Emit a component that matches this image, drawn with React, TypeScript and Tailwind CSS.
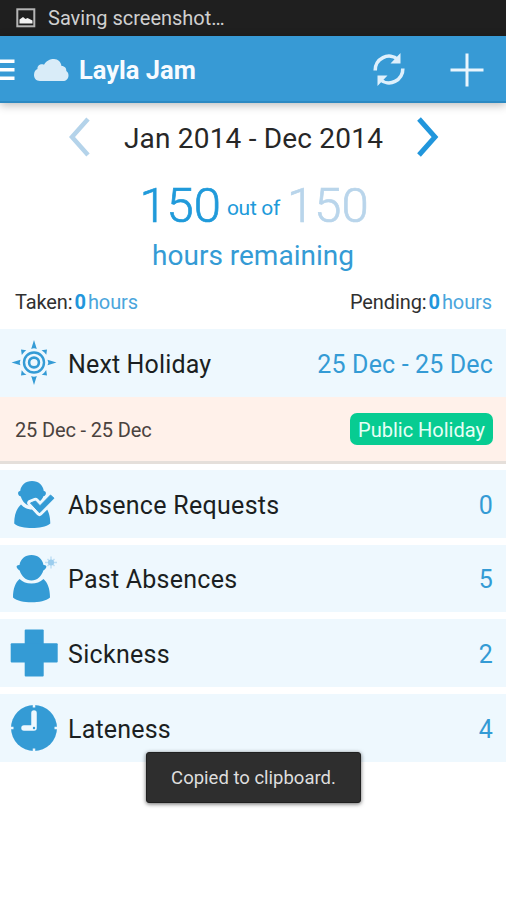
import type { ReactNode } from "react";

const BLUE = "#349bd5";

function SunIcon() {
  return (
    <svg width="46" height="46" viewBox="0 0 46 46" fill="none">
      <circle cx="23" cy="22.500" r="10" stroke={BLUE} strokeWidth="2.400" />
      <circle cx="23" cy="22.500" r="4.900" stroke={BLUE} strokeWidth="2.600" />
      {[0, 90, 180, 270].map((a) => (
        <g key={a} transform={`rotate(${a} 23 22.500)`} fill={BLUE}>
          <path d="M23 0 25.800 9Q23 7.500 20.200 9Z" />
          <path d="M36 9.500 35.300 14.800Q33.500 12 30.500 10.300Z" />
        </g>
      ))}
    </svg>
  );
}

function RequestIcon() {
  const check = "M19.500 24 24.500 22 29 26.700 39.500 16 43 19.200 28.500 33.800Z";
  return (
    <svg width="46" height="50" viewBox="0 0 46 50">
      <path
        d="M21 2C27.500 2 32 6 32.800 12 34.500 12 35.300 13.500 34.800 15 34.400 16.500 33.500 17 32.200 17.500 30.500 23 26.500 27 21 27S11.500 23 9.800 17.500C8.500 17 7.600 16.500 7.200 15 6.700 13.500 7.500 12 9.200 12 10 6 14.500 2 21 2Z"
        fill={BLUE}
      />
      <path
        d="M10 25.500C13 28.800 16.500 30.500 21 30.500S29 28.800 34 27C37 31 39.300 36 39.300 44.500 35 48 28 49 21 49S7 48 3.200 44.500C3.200 35 6 29 10 25.500Z"
        fill={BLUE}
      />
      <path d={check} fill="#eef8fe" stroke="#eef8fe" strokeWidth="6.500" strokeLinejoin="round" />
      <path d={check} fill={BLUE} stroke={BLUE} strokeWidth="1" strokeLinejoin="round" />
    </svg>
  );
}

function PersonIcon() {
  return (
    <svg width="46" height="50" viewBox="0 0 46 50">
      <path
        d="M20.500 2C27 2 31.500 6 32.500 12 34.500 11.800 36 13 35.200 14.500 34.500 16 33.500 16.800 32.300 17.500 30.500 23.500 26 27.500 20.500 27.500S10.500 23.500 8.700 17.500C7.500 16.800 6.500 16 5.800 14.500 5 13 6.500 11.800 8.500 12 9.500 6 14 2 20.500 2Z"
        fill={BLUE}
      />
      <path
        d="M8.500 26C12 29.200 15.500 30.500 20.500 30.500S29 29.200 32.500 26C36.500 29.500 39 35.500 39 44.500 35 48 28 49.200 20.500 49.200S6 48 2 44.500C2 35.500 4.500 29.500 8.500 26Z"
        fill={BLUE}
      />
      <g stroke="#9bcdee" strokeWidth="1.400">
        <circle cx="40" cy="9.500" r="3" fill="#9bcdee" stroke="none" />
        <path d="M40 3.500V15.500M34 9.500H46M36.500 6 43.500 13M43.500 6 36.500 13" opacity=".6" />
      </g>
    </svg>
  );
}

function CrossIcon() {
  return (
    <svg width="48" height="48" viewBox="0 0 48 48" fill={BLUE}>
      <rect x="14.700" y="0.500" width="19" height="47" rx="1" />
      <rect x="0.700" y="14.200" width="47" height="19.300" rx="1" />
    </svg>
  );
}

function ClockIcon() {
  return (
    <svg width="48" height="48" viewBox="0 0 48 48">
      <circle cx="24" cy="24" r="23" fill={BLUE} />
      <path d="M24 0V3.500M24 44.500V48M0 24H3.500M44.500 24H48" stroke="#eef8fe" strokeWidth="2.500" />
      <path d="M24 9V24H14" fill="none" stroke="#eef8fe" strokeWidth="5.500" strokeLinecap="round" strokeLinejoin="round" />
      <circle cx="24" cy="24" r="1.200" fill={BLUE} />
    </svg>
  );
}

interface RowProps {
  icon: ReactNode;
  label: string;
  value: string;
  spacing?: string;
}

function Row({ icon, label, value, spacing = "" }: RowProps) {
  return (
    <div className="flex h-[67.500px] shrink-0 items-center bg-[#eef8fe] pr-[13px] pl-[10px]">
      <div className="flex w-12 items-center justify-center">{icon}</div>
      <div className={`ml-[10px] flex-1 pt-[3px] text-[25px] text-[#1b1f22] ${spacing}`}>{label}</div>
      <div className="pt-[3px] text-[25px] tracking-[0.150px] text-[#349bd5]">{value}</div>
    </div>
  );
}

function Hours({ label }: { label: string }) {
  return (
    <div className="flex tracking-[-0.100px]">
      <span>{label}</span>
      <b className="ml-[2px] text-[#2196dc]">0</b>
      <span className="ml-[2px] text-[#4aa5dc]">hours</span>
    </div>
  );
}

export default function App() {
  return (
    <div className="relative flex h-[900px] w-[506px] flex-col overflow-hidden bg-white font-['Roboto',sans-serif] leading-none whitespace-nowrap">
      <div className="flex h-[35.500px] shrink-0 items-center bg-[#1f1f1f] pl-4">
        <svg width="20" height="20" viewBox="0 0 20 20">
          <rect x="1.300" y="1.300" width="17" height="17" fill="none" stroke="#b5b5b5" strokeWidth="2" />
          <path d="M3.500 15.500V11.500L7 9 9.500 11 11.500 10 16.500 12.500V15.500Z" fill="#f2f2f2" />
        </svg>
        <span className="ml-3 text-[20px] text-[#d0d0d0]">Saving screenshot…</span>
      </div>

      <header className="z-10 flex h-[67px] shrink-0 items-center border-b-2 border-[#2c89c2] bg-[#379ad5] pt-[3px] shadow-[0_2px_9px_rgba(0,0,0,0.28)]">
        <svg className="mt-[1px]" width="15" height="22" viewBox="0 0 15 22" fill="#fff">
          <path d="M0 0.500H14.500V4H0ZM0 9H14.500V12.500H0ZM0 17.500H14.500V21H0Z" />
        </svg>
        <svg className="ml-[18px]" width="37" height="24" viewBox="0 0 37 24" fill="#d9ecf8">
          <path d="M7 23C3 23 1 20 1 17 1 14 2.500 11.500 4.500 11 4 7.500 8 5.300 11 6.800 13 3 17 1 21 1 25 1 28 4 28.500 8 32 8 33.500 10.500 33.300 13 35 14 35.500 16 35.500 17.500 35.500 21 33 23 30 23Z" />
        </svg>
        <h1 className="mt-[3px] ml-[9px] text-[25.500px] font-bold text-[#f7fbff]">Layla Jam</h1>
        <svg className="mr-[43px] ml-auto" width="34" height="36" viewBox="0 0 34 36" fill="none" stroke="#dff0fc" strokeWidth="3.600">
          <path d="M3.200 18.500A13.800 13.800 0 0 1 26 7.500M30.800 16.500A13.800 13.800 0 0 1 8 27.500" />
          <path d="M28.500 1V11.500H18.500ZM5.500 34V23.500H15.500Z" fill="#dff0fc" stroke="none" />
        </svg>
        <svg className="mr-[21px]" width="36" height="36" viewBox="0 0 36 36" stroke="#e9f5fd" strokeWidth="3">
          <path d="M18 1.500V34.500M1.500 18H34.500" />
        </svg>
      </header>

      <section className="flex h-[226.500px] shrink-0 flex-col">
        <div className="flex h-[69px] items-center justify-between pr-[67px] pl-[68px]">
          <svg width="22" height="40" viewBox="0 0 22 40" fill="none" stroke="#b4d3ea" strokeWidth="4.500">
            <path d="M20 2 4 20 20 38" />
          </svg>
          <span className="pt-[3px] text-[28px] tracking-[0.200px] text-[#272727]">Jan 2014 - Dec 2014</span>
          <svg width="22" height="40" viewBox="0 0 22 40" fill="none" stroke="#2196dc" strokeWidth="5">
            <path d="M2 2 18 20 2 38" />
          </svg>
        </div>
        <div className="flex h-[66px] items-center justify-center pt-[2px] pl-[2px] text-[49px] font-light text-[#209ada]">
          <span className="[-webkit-text-stroke:0.700px_#209ada]">150</span>
          <span className="mr-[7px] ml-[6px] pt-[6px] text-[21px] font-normal tracking-[-0.300px]">out of</span>
          <span className="text-[#b9d5eb] [-webkit-text-stroke:0.700px_#b9d5eb]">150</span>
        </div>
        <div className="flex h-[36px] items-center justify-center pt-[1px] text-[28px] text-[#349bd5]">hours remaining</div>
        <div className="flex h-[55px] items-center justify-between pt-[2px] pr-[14px] pl-[15px] text-[20px] text-[#303030]">
          <Hours label="Taken:" />
          <Hours label="Pending:" />
        </div>
      </section>

      <Row icon={<SunIcon />} label="Next Holiday" value="25 Dec - 25 Dec" spacing="tracking-[0.150px]" />
      <div className="flex h-[67.500px] shrink-0 items-center justify-between border-b-[3px] border-[#e5dfda] bg-[#fff1ea] pr-[13px] pl-[15px]">
        <span className="pt-[3px] text-[20px] tracking-[-0.150px] text-[#4a423e]">25 Dec - 25 Dec</span>
        <span className="flex h-8 w-[143px] items-center justify-center rounded-[7px] bg-[#07cc92] pt-[3px] text-[20px] text-[#e7fff6]">Public Holiday</span>
      </div>
      <div className="flex flex-col gap-[7.200px] pt-[6px]">
        <Row icon={<RequestIcon />} label="Absence Requests" value="0" spacing="tracking-[0.300px]" />
        <Row icon={<PersonIcon />} label="Past Absences" value="5" spacing="tracking-[0.250px]" />
        <Row icon={<CrossIcon />} label="Sickness" value="2" spacing="tracking-[0.300px]" />
        <Row icon={<ClockIcon />} label="Lateness" value="4" spacing="tracking-[0.200px]" />
      </div>

      <div className="absolute top-[752px] left-[146px] flex h-[51px] w-[215px] items-center justify-center rounded-[3px] border border-[#202020] bg-[#2e2e2e] pt-[2px] text-[18.500px] text-[#dedede] shadow-[0_1px_4px_rgba(0,0,0,0.6)]">
        Copied to clipboard.
      </div>
    </div>
  );
}
